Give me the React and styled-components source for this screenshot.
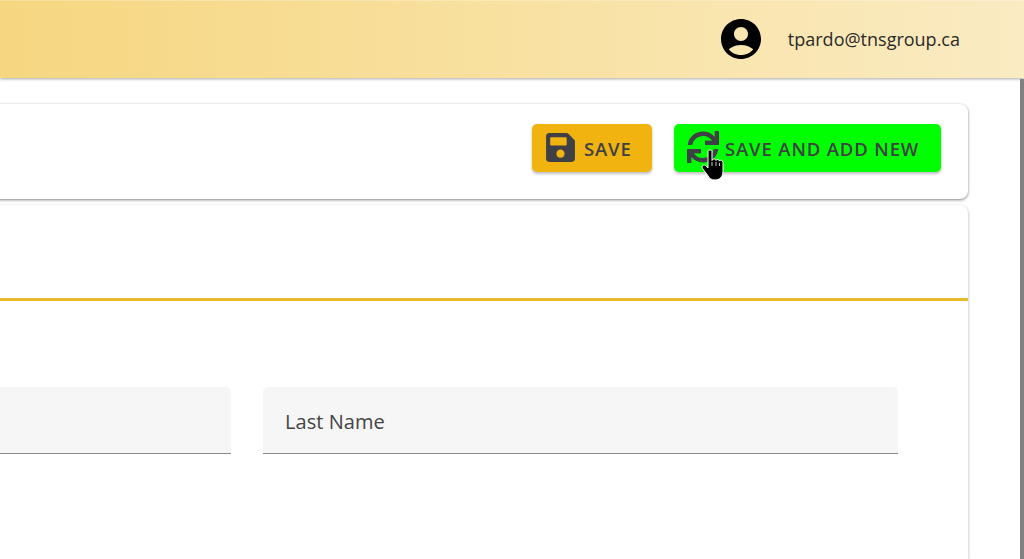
import { createGlobalStyle, styled } from 'styled-components'
import { FaSave, FaSync } from 'react-icons/fa'
import { MdAccountCircle } from 'react-icons/md'

const GlobalStyle = createGlobalStyle`
  html, body {
    margin: 0;
    padding: 0;
    background: #fff;
    overflow: hidden;
  }
  * {
    box-sizing: border-box;
  }
  body {
    font-family: "Open Sans", "Noto Sans", sans-serif;
  }
`

const Page = styled.div`
  width: 1024px;
  height: 559px;
  overflow: hidden;
  position: relative;
  display: flex;
  flex-direction: column;
`

const Header = styled.header`
  height: 78px;
  flex: none;
  display: flex;
  align-items: center;
  justify-content: flex-end;
  padding-right: 64px;
  background: linear-gradient(90deg, #f6d680 0%, #faebc2 100%);
  box-shadow: inset 0 1px 0 rgba(255, 255, 255, 0.25), 0 1px 3px rgba(0, 0, 0, 0.35);
`

const UserIcon = styled(MdAccountCircle)`
  font-size: 48px;
  color: #000;
  margin-right: 23px;
`

const Email = styled.span`
  font-size: 18px;
  color: #2a2a2a;
`

const Scrollbar = styled.div`
  position: absolute;
  top: 79px;
  right: 0;
  bottom: 0;
  width: 4px;
  background: #808080;
`

const Content = styled.main`
  flex: 1;
  width: 1008px;
  margin-left: -40px;
  padding-top: 26px;
  display: flex;
  flex-direction: column;
  gap: 6px;
`

const Toolbar = styled.section`
  height: 95px;
  flex: none;
  display: flex;
  align-items: center;
  justify-content: flex-end;
  gap: 22px;
  padding: 0 27px 8px 0;
  background: #fff;
  border-radius: 8px;
  box-shadow: 0 1px 3px rgba(0, 0, 0, 0.5);
`

const ActionButton = styled.button`
  position: relative;
  height: 48px;
  width: ${(p) => p.$width}px;
  display: flex;
  align-items: center;
  gap: ${(p) => p.$gap}px;
  padding: 0 0 0 ${(p) => p.$inset}px;
  border: 0;
  border-radius: 5px;
  background: ${(p) => p.$bg};
  color: #3f3f46;
  font-family: inherit;
  font-size: 18.5px;
  font-weight: 600;
  letter-spacing: 0.85px;
  box-shadow: 0 2px 3px rgba(0, 0, 0, 0.25);
  svg.icon {
    font-size: ${(p) => p.$icon}px;
    flex: none;
    margin-top: -1px;
  }
`

const ButtonLabel = styled.span`
  margin-top: 2px;
`

const HandCursor = styled.svg`
  position: absolute;
  left: 27px;
  top: 25px;
  width: 24px;
  height: 32px;
`

const FormCard = styled.section`
  flex: 1;
  background: #fff;
  border-radius: 8px 8px 0 0;
  box-shadow: 0 1px 3px rgba(0, 0, 0, 0.35);
`

const CardTitle = styled.div`
  height: 96px;
  border-bottom: 3px solid #e6ba2a;
`

const FieldRow = styled.div`
  display: flex;
  gap: 32px;
  padding: 86px 70px 0 0;
`

const Field = styled.div`
  height: 67px;
  width: ${(p) => p.$width}px;
  display: flex;
  align-items: center;
  padding: 3px 0 0 22px;
  background: #f6f6f6;
  border-radius: 5px 5px 0 0;
  border-bottom: 1px solid #8a8a8a;
  color: #444;
  font-size: 20px;
  letter-spacing: 0.05px;
`

export default function App() {
  return (
    <Page>
      <GlobalStyle />
      <Header>
        <UserIcon />
        <Email>tpardo@tnsgroup.ca</Email>
      </Header>
      <Content>
        <Toolbar>
          <ActionButton $bg="#f0b310" $width={120} $gap={7} $inset={12} $icon={33}>
            <FaSave className="icon" />
            <ButtonLabel>SAVE</ButtonLabel>
          </ActionButton>
          <ActionButton $bg="#00ff00" $width={267} $gap={6} $inset={13} $icon={32}>
            <FaSync className="icon" />
            <ButtonLabel>SAVE AND ADD NEW</ButtonLabel>
            <HandCursor viewBox="0 0 24 32">
              <path
                d="M7 2.500C7 .5 11 .5 11 2.500V11.500C11.500 9.500 14.500 9.500 15 11.500C15.500 10 18 10 18.500 12C19 10.800 22 11 22 13.500V22C22 27.500 19 31 14 31C10 31 8 29 6.500 26L1.500 19.500C.2 17.500 2.500 15 4.500 16.500L7 19z"
                fill="#000"
                stroke="#fff"
                strokeWidth="1"
              />
              <path
                d="M11 13V17M15 13V17M18.500 14V17"
                fill="none"
                stroke="#fff"
                strokeWidth="0.8"
              />
            </HandCursor>
          </ActionButton>
        </Toolbar>
        <FormCard>
          <CardTitle />
          <FieldRow>
            <Field $width={271} />
            <Field $width={635}>Last Name</Field>
          </FieldRow>
        </FormCard>
      </Content>
      <Scrollbar />
    </Page>
  )
}
